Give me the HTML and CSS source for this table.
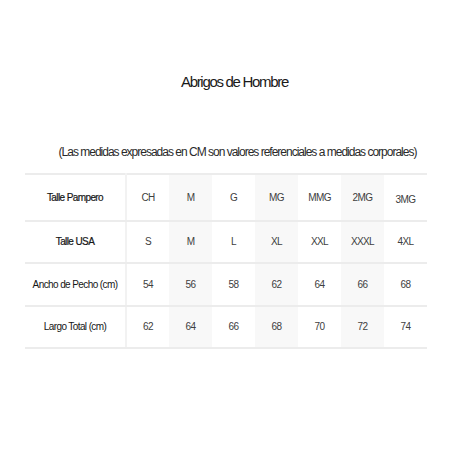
FILE: index.html
```html
<!DOCTYPE html>
<html lang="es">
<head>
<meta charset="utf-8">
<title>Abrigos de Hombre</title>
<link rel="stylesheet" href="styles.css">
</head>
<body>
<main class="page">
  <h1 class="title">Abrigos de Hombre</h1>
  <p class="note">(Las medidas expresadas en CM son valores referenciales a medidas corporales)</p>
  <table class="sizes">
    <tbody>
      <tr>
        <th>Talle Pampero</th>
        <td>CH</td><td class="alt">M</td><td>G</td><td class="alt">MG</td><td>MMG</td><td class="alt">2MG</td><td class="last">3MG</td>
      </tr>
      <tr>
        <th>Talle USA</th>
        <td>S</td><td class="alt">M</td><td>L</td><td class="alt">XL</td><td>XXL</td><td class="alt">XXXL</td><td>4XL</td>
      </tr>
      <tr>
        <th class="light">Ancho de Pecho (cm)</th>
        <td>54</td><td class="alt">56</td><td>58</td><td class="alt">62</td><td>64</td><td class="alt">66</td><td>68</td>
      </tr>
      <tr>
        <th class="light">Largo Total (cm)</th>
        <td>62</td><td class="alt">64</td><td>66</td><td class="alt">68</td><td>70</td><td class="alt">72</td><td>74</td>
      </tr>
    </tbody>
  </table>
</main>
</body>
</html>
```

FILE: styles.css
```css
html, body {
  margin: 0;
  padding: 0;
  background: #ffffff;
}

body {
  font-family: "Liberation Sans", Arial, sans-serif;
  color: #1f1f1f;
}

.page {
  width: 450px;
  height: 450px;
  padding-top: 73px;
  box-sizing: border-box;
}

.title {
  margin: 0;
  padding-left: 19px;
  font-size: 15px;
  font-weight: normal;
  line-height: 18px;
  letter-spacing: -1.3px;
  text-align: center;
  color: #1a1a1a;
}

.note {
  margin: 54px 0 0;
  padding-left: 25px;
  font-size: 12px;
  line-height: 14px;
  letter-spacing: -1px;
  text-align: center;
  color: #2a2a2a;
}

.sizes {
  margin: 14px 0 0 25px;
  width: 402px;
  border-collapse: collapse;
  table-layout: fixed;
  font-size: 10px;
}

.sizes th,
.sizes td {
  height: 40.5px;
  padding: 0;
  text-align: center;
  vertical-align: middle;
  border-top: 2px solid #ececec;
  border-bottom: 2px solid #ececec;
}

.sizes th {
  width: 100px;
  font-size: 10px;
  font-weight: normal;
  letter-spacing: -0.6px;
  color: #161616;
  border-right: 2px solid #f2f2f2;
  -webkit-text-stroke: 0.2px #161616;
}

.sizes th.light {
  -webkit-text-stroke: 0;
}

.sizes td {
  color: #404040;
  letter-spacing: -0.6px;
}

.sizes td.alt {
  background: #f8f8f8;
}

.sizes td.last {
  padding-top: 4px;
}
```
